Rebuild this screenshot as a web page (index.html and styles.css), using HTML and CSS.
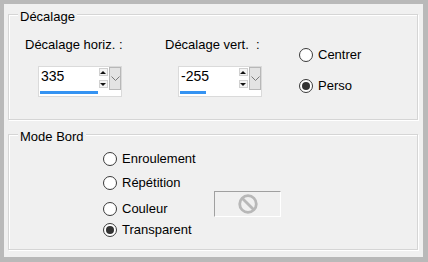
FILE: index.html
```html
<!DOCTYPE html>
<html lang="fr">
<head>
    <meta charset="UTF-8">
    <title>Décalage</title>
    <link rel="stylesheet" href="styles.css">
</head>
<body>
    <div class="dialog">
        <fieldset class="group">
            <legend>Décalage</legend>
            <div class="offset-row">
                <div class="offset-col">
                    <label>Décalage horiz. :</label>
                    <div class="spin">
                        <div class="spin-field">
                            <div class="spin-top">
                                <span class="spin-value">335</span>
                                <span class="spin-arrows"><span class="arrow up"></span><span class="arrow down"></span></span>
                            </div>
                            <div class="spin-track"><div class="spin-bar" style="width:58px"></div></div>
                        </div>
                        <div class="spin-drop"><svg width="9" height="6" viewBox="0 0 9 6"><polyline points="0.5,0.5 4.5,4.5 8.5,0.5" fill="none" stroke="#7a7a7a"/></svg></div>
                    </div>
                </div>
                <div class="offset-col offset-col-2">
                    <label>Décalage vert.&nbsp; :</label>
                    <div class="spin">
                        <div class="spin-field">
                            <div class="spin-top">
                                <span class="spin-value">-255</span>
                                <span class="spin-arrows"><span class="arrow up"></span><span class="arrow down"></span></span>
                            </div>
                            <div class="spin-track"><div class="spin-bar" style="width:26px"></div></div>
                        </div>
                        <div class="spin-drop"><svg width="9" height="6" viewBox="0 0 9 6"><polyline points="0.5,0.5 4.5,4.5 8.5,0.5" fill="none" stroke="#7a7a7a"/></svg></div>
                    </div>
                </div>
                <div class="radio-col">
                    <div class="radio"><span class="dot"></span>Centrer</div>
                    <div class="radio"><span class="dot on"></span>Perso</div>
                </div>
            </div>
        </fieldset>
        <fieldset class="group group-mode">
            <legend>Mode Bord</legend>
            <div class="mode-list">
                <div class="radio"><span class="dot"></span>Enroulement</div>
                <div class="radio r-repeat"><span class="dot"></span>Répétition</div>
                <div class="color-row">
                    <div class="radio"><span class="dot"></span>Couleur</div>
                    <div class="swatch">
                        <svg width="22" height="22" viewBox="0 0 22 22"><circle cx="11" cy="11" r="8.3" fill="none" stroke="#b8b8b8" stroke-width="2.8"/><line x1="5.2" y1="5.2" x2="16.8" y2="16.8" stroke="#b8b8b8" stroke-width="2.8"/></svg>
                    </div>
                </div>
                <div class="radio r-transp"><span class="dot on"></span>Transparent</div>
            </div>
        </fieldset>
    </div>
</body>
</html>
```

FILE: styles.css
```css
html,body{
    margin:0;
    padding:0;
    background:#b9b9b9;
}
.dialog{
    width:428px;
    height:262px;
    box-sizing:border-box;
    border:solid #b9b9b9;
    border-width:4px 5px 5px 4px;
    padding:1px 5px 0 4px;
    background:#f0f0f0;
    font-family:"Liberation Sans",Arial,sans-serif;
    font-size:13px;
    color:#000;
}
.group{
    margin:0;
    padding:0;
    min-width:0;
    border:1px solid #d5d5d5;
    box-shadow:inset 1px 1px 0 #fff,1px 1px 0 #fff;
}
.group legend{
    margin-left:9px;
    padding:4px 2px 0;
    line-height:15px;
    background:#f0f0f0;
}
.group-mode{
    margin-top:5px;
}
.offset-row{
    display:flex;
    padding:13px 0 22px 16px;
}
.offset-col{
    width:140px;
}
.offset-col-2{
    width:134px;
}
.offset-col label{
    display:block;
    line-height:15px;
    margin-bottom:14px;
}
.spin{
    display:flex;
    width:84px;
    height:31px;
    box-sizing:border-box;
    margin-left:13px;
    border:1px solid #dadada;
    background:#fff;
}
.spin-field{
    flex:1;
    display:flex;
    flex-direction:column;
}
.spin-top{
    flex:1;
    display:flex;
}
.spin-value{
    flex:1;
    font-size:14px;
    line-height:16px;
    padding:1px 0 0 2px;
}
.spin-arrows{
    width:12px;
    display:flex;
    flex-direction:column;
    align-items:center;
    gap:4px;
    padding-top:1px;
}
.arrow{
    width:9px;
    height:8px;
    box-sizing:border-box;
    border:1px solid #d0d0d0;
    background:#f4f4f4;
    display:flex;
    align-items:center;
    justify-content:center;
}
.arrow::after{
    content:'';
    border-left:3px solid transparent;
    border-right:3px solid transparent;
}
.arrow.up::after{
    border-bottom:3px solid #111;
}
.arrow.down::after{
    border-top:3px solid #111;
}
.spin-track{
    height:3px;
    margin:0 0 2px 1px;
}
.spin-bar{
    height:100%;
    background:#3593f2;
}
.spin-drop{
    width:12px;
    height:23px;
    box-sizing:border-box;
    border:1px solid #b8b8b8;
    background:#e3e3e3;
    display:flex;
    align-items:center;
    justify-content:center;
}
.radio-col{
    display:flex;
    flex-direction:column;
    gap:15px;
    padding-top:10px;
}
.radio{
    display:flex;
    align-items:center;
    gap:5px;
    height:16px;
    line-height:16px;
}
.dot{
    width:14px;
    height:14px;
    box-sizing:border-box;
    border:1px solid #3a3a3a;
    border-radius:50%;
    background:#fff;
    display:flex;
    align-items:center;
    justify-content:center;
}
.dot.on::after{
    content:'';
    width:8px;
    height:8px;
    border-radius:50%;
    background:#333;
}
.mode-list{
    display:flex;
    flex-direction:column;
    padding:7px 0 11px 94px;
}
.r-repeat{
    margin-top:8px;
}
.color-row{
    display:flex;
    align-items:flex-end;
    width:178px;
}
.swatch{
    margin-left:auto;
    width:67px;
    height:26px;
    box-sizing:border-box;
    border:1px solid;
    border-color:#a0a0a0 #fff #fff #a0a0a0;
    display:flex;
    align-items:center;
    justify-content:center;
}
.r-transp{
    margin-top:5px;
}
```
